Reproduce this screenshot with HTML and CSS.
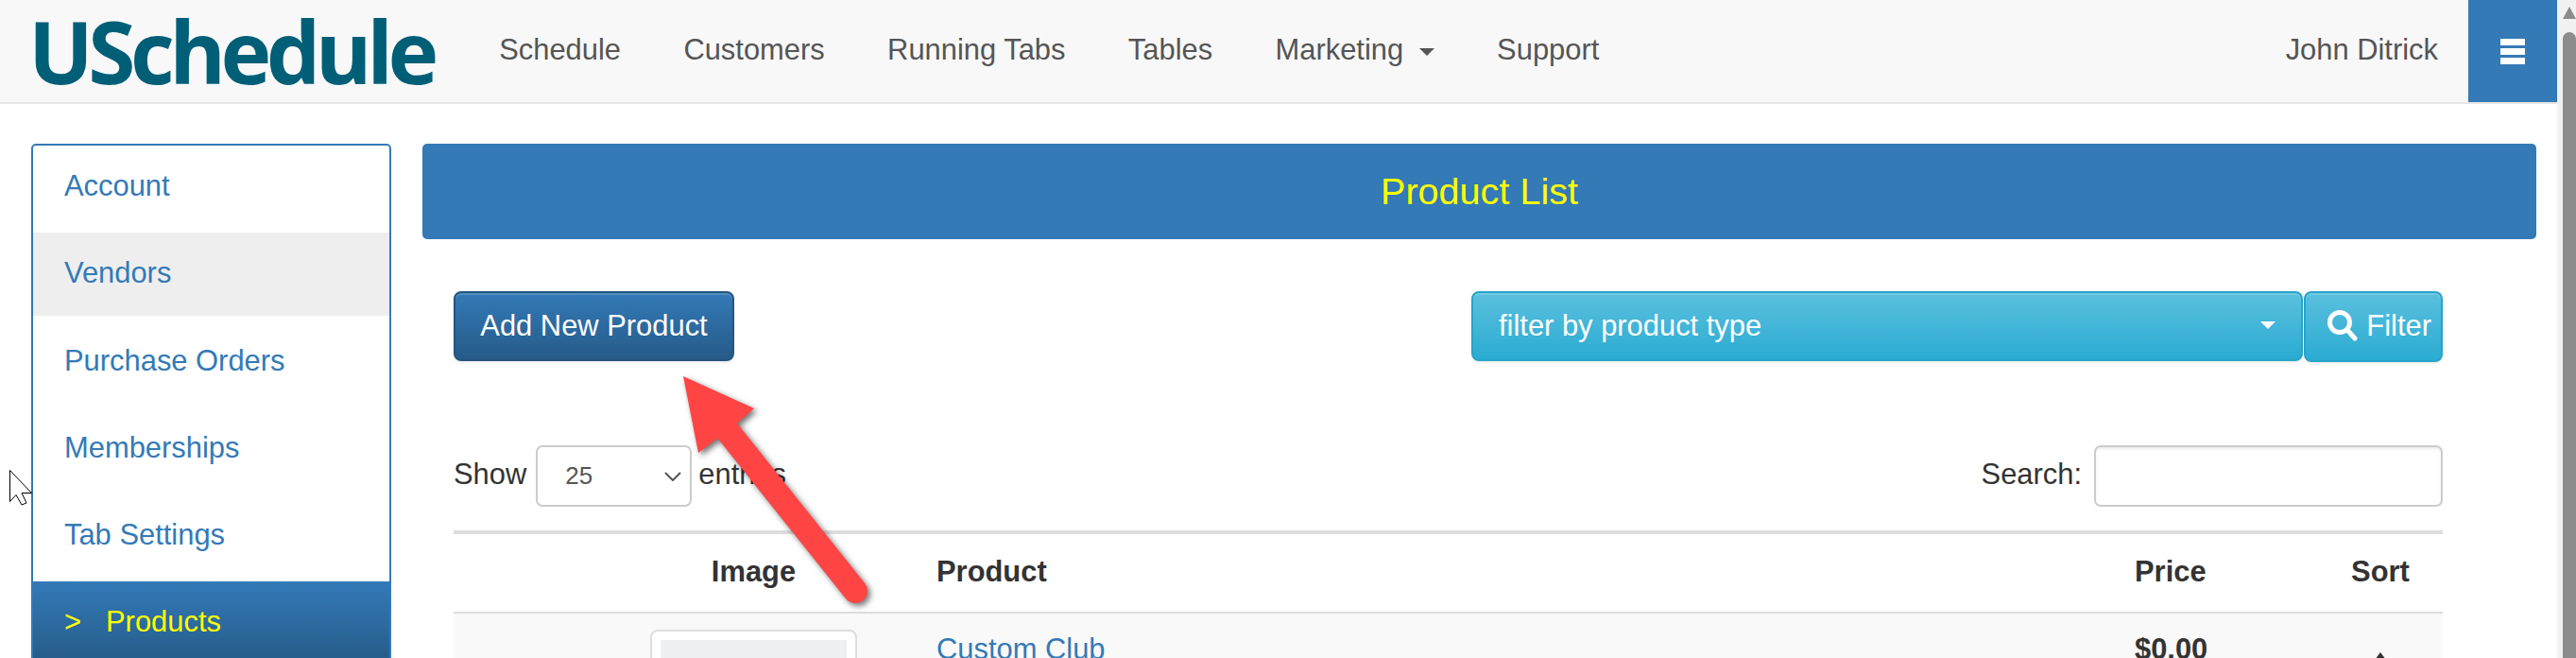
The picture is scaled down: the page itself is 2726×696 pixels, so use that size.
FILE: index.html
```html
<!DOCTYPE html>
<html lang="en">
<head>
    <meta charset="UTF-8">
    <title>USchedule - Product List</title>
    <link rel="stylesheet" href="styles.css">
</head>
<body>
    <div class="page">
        <nav class="navbar">
            <a class="logo" href="#">USchedule</a>
            <ul class="menu">
                <li><a href="#">Schedule</a></li>
                <li><a href="#">Customers</a></li>
                <li><a href="#">Running Tabs</a></li>
                <li><a href="#">Tables</a></li>
                <li><a href="#">Marketing <span class="caret"></span></a></li>
                <li><a href="#">Support</a></li>
            </ul>
            <a class="user" href="#">John Ditrick</a>
            <a class="toggle" href="#">
                <span></span>
                <span></span>
                <span></span>
            </a>
        </nav>

        <div class="content">
            <div class="sidebar">
                <a href="#">Account</a>
                <a href="#" class="hover">Vendors</a>
                <a href="#">Purchase Orders</a>
                <a href="#">Memberships</a>
                <a href="#">Tab Settings</a>
                <a href="#" class="active"><span class="mark">&gt;</span>Products</a>
            </div>

            <div class="main">
                <h1 class="title">Product List</h1>
                <div class="body">
                    <div class="toolbar">
                        <a class="btn btn-primary" href="#">Add New Product</a>
                        <div class="filter">
                            <div class="btn btn-info dropdown">
                                <span>filter by product type</span>
                                <span class="caret caret-white"></span>
                            </div>
                            <a class="btn btn-info filter-btn" href="#">
                                <svg width="32" height="34" viewBox="0 0 32 34" fill="none" stroke="#fff" stroke-width="5" stroke-linecap="round">
                                    <circle cx="13" cy="13" r="10.5"/>
                                    <line x1="21" y1="21" x2="29" y2="30"/>
                                </svg>
                                Filter
                            </a>
                        </div>
                    </div>

                    <div class="table-tools">
                        <div class="show">
                            <span>Show</span>
                            <div class="select-box">
                                <span>25</span>
                                <svg width="18" height="10" viewBox="0 0 18 10" fill="none" stroke="#555" stroke-width="2">
                                    <polyline points="1,1 9,9 17,1"/>
                                </svg>
                            </div>
                            <span>entries</span>
                        </div>
                        <label class="search">
                            <span>Search:</span>
                            <input type="text">
                        </label>
                    </div>

                    <table class="products">
                        <colgroup>
                            <col class="col-image">
                            <col class="col-product">
                            <col class="col-price">
                            <col class="col-sort">
                        </colgroup>
                        <thead>
                            <tr>
                                <th class="cell-image">Image</th>
                                <th>Product</th>
                                <th>Price</th>
                                <th class="cell-sort">Sort</th>
                            </tr>
                        </thead>
                        <tbody>
                            <tr>
                                <td class="cell-image">
                                    <div class="thumb"><div class="thumb-img"></div></div>
                                </td>
                                <td><a href="#">Custom Club</a></td>
                                <td class="price">$0.00</td>
                                <td class="cell-sort"><span class="sort-up"></span></td>
                            </tr>
                        </tbody>
                    </table>
                </div>
            </div>
        </div>

        <!-- annotation drawn on the screenshot -->
        <svg class="arrow" width="240" height="260" viewBox="0 0 240 260">
            <polygon points="3,8 78,42 60,58 39,74 19,89" fill="#ff4444"/>
            <line x1="50" y1="66" x2="185" y2="235" stroke="#ff4444" stroke-width="26" stroke-linecap="round"/>
        </svg>
        <svg class="pointer" width="26" height="40" viewBox="0 0 26 40">
            <polygon points="1.5,1.5 1.5,34.5 8,27.5 14,38 19,36 14,25.5 24.5,25.5" fill="#fff" stroke="#000" stroke-width="1"/>
        </svg>
    </div>

    <div class="scrollbar">
        <div class="scroll-arrow"></div>
        <div class="scroll-thumb"></div>
    </div>
</body>
</html>
```

FILE: styles.css
```css
html, body {
    height: 100%;
    margin: 0;
    overflow: hidden;
}
body {
    display: flex;
    font-family: "Liberation Sans", Arial, sans-serif;
    font-size: 30.9px;
    line-height: 41px;
    color: #333;
    background: #fff;
}
a {
    color: #337ab7;
    text-decoration: none;
}
.page {
    position: relative;
    flex: 1;
    min-width: 0;
    height: 696px;
    overflow: hidden;
}

/* navbar */
.navbar {
    display: flex;
    align-items: center;
    height: 108px;
    background: #f8f8f8;
    border-bottom: 2px solid #e7e7e7;
}
.logo {
    width: 465px;
    padding-left: 30px;
    font-family: "Open Sans", sans-serif;
    font-weight: 700;
    font-size: 91px;
    letter-spacing: -5.5px;
    line-height: 100px;
    color: #005f77;
}
.menu {
    display: flex;
    list-style: none;
    margin: 0 0 3px;
    padding: 0;
}
.menu a {
    display: block;
    padding: 0 33.2px;
    color: #555;
}
.caret {
    display: inline-block;
    width: 0;
    height: 0;
    margin-left: 8px;
    vertical-align: middle;
    border-top: 8px solid #555;
    border-left: 8px solid transparent;
    border-right: 8px solid transparent;
}
.caret-white {
    border-top-color: #fff;
    margin-left: 0;
}
.user {
    margin: 0 32px 3px auto;
    color: #555;
}
.toggle {
    display: flex;
    flex-direction: column;
    justify-content: center;
    align-items: center;
    gap: 3px;
    width: 94px;
    height: 108px;
    background: #337ab7;
}
.toggle span {
    width: 26px;
    height: 7px;
    background: #fff;
}

/* layout */
.content {
    display: flex;
    align-items: flex-start;
    gap: 33px;
    padding: 42px 22px 0 33px;
}
.sidebar {
    display: flex;
    flex-direction: column;
    flex: none;
    width: 381px;
    height: 700px;
    box-sizing: border-box;
    border: 2px solid #337ab7;
    border-radius: 5px 5px 0 0;
    gap: 4.3px;
}
.sidebar a {
    flex: none;
    height: 88px;
    line-height: 85px;
    padding-left: 33px;
}
.sidebar .hover {
    background: #eee;
}
.sidebar .active {
    height: 130px;
    color: #ff0;
    background: linear-gradient(to bottom, #337ab7 0, #265a88 88px);
}
.mark {
    display: inline-block;
    width: 44px;
}
.main {
    flex: 1;
    min-width: 0;
}
.title {
    margin: 0;
    height: 101px;
    line-height: 100px;
    text-align: center;
    font-size: 39.6px;
    font-weight: normal;
    color: #ff0;
    background: #337ab7;
    border-radius: 5px;
}
.body {
    padding: 55px 99px 0 33px;
}

/* buttons */
.toolbar {
    display: flex;
    justify-content: space-between;
    align-items: flex-start;
}
.btn {
    display: flex;
    align-items: center;
    box-sizing: border-box;
    height: 74px;
    padding-bottom: 2px;
    color: #fff;
    border-radius: 8px;
    box-shadow: inset 0 2px 0 rgba(255, 255, 255, 0.15), 0 2px 3px rgba(0, 0, 0, 0.07);
}
.btn-primary {
    justify-content: center;
    width: 297px;
    background: linear-gradient(to bottom, #337ab7, #265a88);
    border: 2px solid #245580;
}
.btn-info {
    background: linear-gradient(to bottom, #5bc0de, #2aabd2);
    border: 2px solid #28a4c9;
}
.filter {
    display: flex;
    gap: 1px;
}
.dropdown {
    justify-content: space-between;
    width: 880px;
    padding: 0 27px 2px;
}
.filter-btn {
    justify-content: flex-end;
    gap: 9px;
    width: 147px;
    height: 75px;
    padding-right: 10px;
}

/* table controls */
.table-tools {
    display: flex;
    justify-content: space-between;
    margin-top: 88px;
}
.show, .search {
    display: flex;
    align-items: center;
    height: 65px;
}
.show > span, .search > span {
    margin-bottom: 4px;
}
.select-box {
    display: flex;
    align-items: center;
    justify-content: space-between;
    box-sizing: border-box;
    width: 165px;
    height: 65px;
    margin: 0 7px 0 10px;
    padding: 0 9px 0 29px;
    font-size: 26px;
    color: #555;
    border: 2px solid #ccc;
    border-radius: 7px;
}
.search input {
    box-sizing: border-box;
    width: 369px;
    height: 65px;
    margin-left: 13px;
    padding: 0 20px;
    border: 2px solid #ccc;
    border-radius: 7px;
    box-shadow: inset 0 2px 3px rgba(0, 0, 0, 0.08);
    outline: none;
}

/* table */
.products {
    width: 2105px;
    margin-top: 25px;
    table-layout: fixed;
    border-collapse: collapse;
    border-top: 4px solid #ddd;
}
.col-image { width: 511px; }
.col-product { width: 1268px; }
.col-price { width: 194px; }
.col-sort { width: 132px; }
.products th {
    height: 79px;
    padding: 0 0 3px;
    text-align: left;
    border-bottom: 2px solid #ddd;
}
.products td {
    padding: 17px 0 0;
    vertical-align: top;
    background: #f9f9f9;
}
.products .cell-image {
    padding-left: 131px;
    padding-right: 7px;
    text-align: center;
}
.products .cell-sort {
    text-align: center;
}
.price {
    font-weight: bold;
}
.thumb {
    box-sizing: border-box;
    width: 219px;
    margin: 0 auto;
    padding: 9px;
    background: #fff;
    border: 2px solid #ddd;
    border-radius: 8px;
}
.thumb-img {
    height: 200px;
    background: #eff0f2;
}
.sort-up {
    display: inline-block;
    width: 0;
    height: 0;
    margin-top: 24px;
    vertical-align: top;
    border-bottom: 12px solid #333;
    border-left: 9px solid transparent;
    border-right: 9px solid transparent;
}

/* overlays */
.arrow {
    position: absolute;
    left: 720px;
    top: 390px;
    filter: drop-shadow(3px 3px 3px rgba(0, 0, 0, 0.55));
}
.pointer {
    position: absolute;
    left: 9px;
    top: 496px;
}

/* scrollbar */
.scrollbar {
    flex: none;
    width: 20px;
    height: 696px;
    background: #f1f1f1;
    padding-left: 6px;
    box-sizing: border-box;
    overflow: hidden;
}
.scroll-arrow {
    width: 0;
    height: 0;
    margin-top: 7px;
    border-bottom: 13px solid #8c8c8c;
    border-left: 7px solid transparent;
    border-right: 7px solid transparent;
}
.scroll-thumb {
    width: 14px;
    height: 700px;
    margin-top: 14px;
    background: #8c8c8c;
    border-radius: 8px 8px 0 0;
}
```
